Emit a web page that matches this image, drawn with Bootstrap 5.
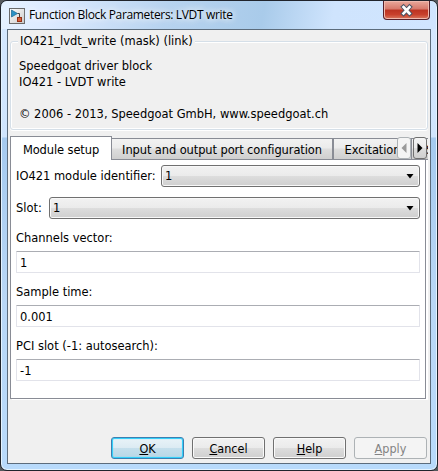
<!DOCTYPE html>
<html lang="en">
<head>
<meta charset="utf-8">
<meta name="viewport" content="width=device-width, initial-scale=1">
<title>Function Block Parameters: LVDT write</title>
<link href="https://cdn.jsdelivr.net/npm/bootstrap@5.3.0/dist/css/bootstrap.min.css" rel="stylesheet">
<style>
body{width:438px;height:471px;background:#55595d;font:12.75px/16px "DejaVu Sans Condensed","DejaVu Sans",sans-serif;font-stretch:condensed;color:#000;white-space:nowrap}
.window{width:438px;height:471px;padding:0 6px 6px;border:1px solid #20242c;border-radius:7px;box-shadow:inset 0 0 0 1px #e4f3ff;background:linear-gradient(#d5e8ff 0,#d0e5fd 136px,#a5caef 137px,#b9d7f6 300px,#b8dafb 100%)}
.titlebar{height:28px;margin:0 -5px;padding:0 6px 0 6px;border-radius:6px 6px 0 0;background:linear-gradient(100deg,#e5f1ff 0,#dceaff 12%,#b7d3ef 38%,#a9cbea 60%,#cfe4fd 76%,#d0e5ff 100%)}
.caption{font:12px/16px "Open Sans","Noto Sans",sans-serif;letter-spacing:-.34px;margin:6px 0 0 4px;text-shadow:0 0 6px #fff,0 0 8px #fff}
.appicon{margin:7px 0 0 1px}
.close-btn{width:47px;height:19px;border:1px solid #56202a;border-top:0;border-radius:0 0 4px 4px;background:linear-gradient(#e9a99c,#d6786a 45%,#bb3322 50%,#c8402c 75%,#d9785f);box-shadow:inset 0 0 0 1px #efb9ae}
.client{height:435px;border:1px solid #5c6c7c;background:#f0f0f0;padding:0 2px}
.mask-group{height:89px;margin:11px 0 0;border:1px solid #d5dfe8;border-radius:3px;box-shadow:inset 0 0 0 1px #fff,0 1px 0 #fff;padding:0 8px}
.legend-text{background:#f0f0f0;padding:0 2px;margin:-9px 0 9px -1px;align-self:flex-start}
.tabs{height:23px;margin-top:6px;position:relative}
.tab-item{height:22px;margin-top:2px;border:1px solid #898c95;border-left:0;background:linear-gradient(#f2f2f2,#ebebeb 45%,#dddddd 50%,#cfcfcf);line-height:21px;overflow:hidden;letter-spacing:-.1px}
.tab-item.current{height:24px;margin-top:0;width:102px;border-left:1px solid #898c95;border-bottom:0;background:#fff;line-height:25px}
.tab-ports{width:222px;border-right-width:2px}
.tab-excitation{width:78px}
.tab-clipped{width:16px;border-right:0;padding-left:14px}
.scroll-btn{position:absolute;top:1px;width:14px;height:22px;border:1px solid #707070;border-radius:3px;background:linear-gradient(#f4f4f4,#ebebeb 48%,#ddd 50%,#cfcfcf)}
.scroll-prev{left:387px;border-color:#adb2b5;background:#f4f4f4}
.scroll-next{left:403px}
.panel{height:240px;width:416px;border:1px solid #898c95;border-top:0;background:#fff;padding:6px 5px 0;box-shadow:2px 1px 0 #fff}
.combo{height:22px;border:1px solid #707070;border-radius:3px;background:linear-gradient(#f2f2f2,#ebebeb 48%,#ddd 50%,#cfcfcf);box-shadow:inset 0 0 0 1px #f8f8f8;padding:0 5px 0 3px}
.module-label{width:145px}
.slot-label{width:33px}
.slot-row{margin-top:10px}
.field{height:22px;border:1px solid #e2e3ea;border-top-color:#abadb3;border-radius:1px;padding:0 3px;line-height:22px}
.field-label{height:32px;padding-top:11px}
.footer-row{margin:0 1px 4px 0}
.push{width:73px;height:22px;border:1px solid #707070;border-radius:3px;background:linear-gradient(#f2f2f2,#ebebeb 48%,#ddd 50%,#cfcfcf);box-shadow:inset 0 0 0 1px #fafafa;line-height:21px;text-align:center;padding:0;color:#000;font-size:12.5px}
.push.default{border-color:#3c7fb1;background:linear-gradient(#e9f3f8,#dcebf3 48%,#c5dfec 50%,#b7d7e6);box-shadow:inset 0 0 0 1px #35d0fa,inset 0 0 1px 1px #5fd8fa}
.push:disabled{border-color:#adb2b5;background:#f4f4f4;color:#838383;opacity:1;box-shadow:none}
</style>
<script src="https://cdn.jsdelivr.net/npm/bootstrap@5.3.0/dist/js/bootstrap.bundle.min.js"></script>
</head>
<body class="overflow-hidden">
<main class="window">
  <header class="titlebar d-flex align-items-start">
    <svg class="appicon" width="16" height="16" viewBox="0 0 16 16"><defs><linearGradient id="paper" x2="1" y2="1"><stop stop-color="#fff"/><stop offset="1" stop-color="#c9c9c9"/></linearGradient></defs><rect x=".5" y=".5" width="15" height="15" fill="url(#paper)" stroke="#6a6a6a"/><path d="M2.500 2v7l6-3.500z" fill="#2b93c7" stroke="#17648f" stroke-width=".7"/><path d="M8.500 5.500h2V9" fill="none" stroke="#444"/><rect x="8.500" y="9.500" width="4" height="4" fill="#d8613a" stroke="#963015"/></svg>
    <span class="caption">Function Block Parameters: LVDT write</span>
    <div class="close-btn ms-auto d-flex justify-content-center"><svg width="14" height="18" viewBox="0 0 14 18"><path d="M3.500 6l6 6.500M9.500 6l-6 6.500" stroke="#4c5464" stroke-width="4.600" stroke-linecap="square"/><path d="M3.500 6l6 6.500M9.500 6l-6 6.500" stroke="#fff" stroke-width="2.600" stroke-linecap="square"/></svg></div>
  </header>
  <section class="client d-flex flex-column">
    <div class="mask-group d-flex flex-column flex-shrink-0">
      <span class="legend-text">IO421_lvdt_write (mask) (link)</span>
      <span>Speedgoat driver block</span>
      <span>IO421 - LVDT write</span>
      <span class="mt-3">© 2006 - 2013, Speedgoat GmbH, www.speedgoat.ch</span>
    </div>
    <nav class="tabs d-flex flex-shrink-0">
      <div class="tab-item current text-center flex-shrink-0">Module setup</div>
      <div class="tab-item tab-ports text-center flex-shrink-0">Input and output port configuration</div>
      <div class="tab-item tab-excitation text-center flex-shrink-0">Excitation</div>
      <div class="tab-item tab-clipped">S</div>
      <div class="scroll-btn scroll-prev d-flex align-items-center justify-content-center"><svg width="6" height="10"><path d="M5.500 0v10L.5 5z" fill="#9a9a9a"/></svg></div>
      <div class="scroll-btn scroll-next d-flex align-items-center justify-content-center"><svg width="6" height="10"><path d="M.5 0v10l5-5z"/></svg></div>
    </nav>
    <div class="panel flex-shrink-0">
      <div class="d-flex align-items-center">
        <span class="module-label">IO421 module identifier:</span>
        <div class="combo flex-grow-1 d-flex align-items-center justify-content-between"><span>1</span><svg width="8" height="5"><path d="M.5 0h7L4 4.500z"/></svg></div>
      </div>
      <div class="slot-row d-flex align-items-center">
        <span class="slot-label">Slot:</span>
        <div class="combo flex-grow-1 d-flex align-items-center justify-content-between"><span>1</span><svg width="8" height="5"><path d="M.5 0h7L4 4.500z"/></svg></div>
      </div>
      <div class="field-label">Channels vector:</div><div class="field">1</div>
      <div class="field-label">Sample time:</div><div class="field">0.001</div>
      <div class="field-label">PCI slot (-1: autosearch):</div><div class="field">-1</div>
    </div>
    <footer class="footer-row d-flex justify-content-end gap-2 mt-auto">
      <button class="push default"><u>O</u>K</button>
      <button class="push"><u>C</u>ancel</button>
      <button class="push"><u>H</u>elp</button>
      <button class="push" disabled><u>A</u>pply</button>
    </footer>
  </section>
</main>
</body>
</html>
